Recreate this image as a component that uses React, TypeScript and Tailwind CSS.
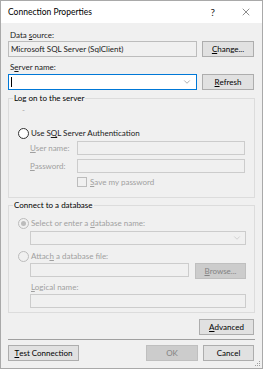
import { ChevronDown, X } from "lucide-react";

const font = {
  fontFamily: 'Lato, "Liberation Sans", Arial, sans-serif',
};

function U({ children }: { children: string }) {
  return <span className="underline underline-offset-[1px]">{children}</span>;
}

function Btn({
  children,
  disabled,
  className = "",
}: {
  children: React.ReactNode;
  disabled?: boolean;
  className?: string;
}) {
  return (
    <div
      className={
        "h-[16px] flex items-center justify-center border whitespace-nowrap " +
        (disabled
          ? "bg-[#cccccc] border-[#bfbfbf] text-[#838383] "
          : "bg-[#e1e1e1] border-[#adadad] text-black ") +
        className
      }
    >
      {children}
    </div>
  );
}

function Radio({ checked, disabled }: { checked?: boolean; disabled?: boolean }) {
  return (
    <div
      className={
        "w-[11px] h-[11px] rounded-full border flex items-center justify-center shrink-0 " +
        (disabled ? "border-[#bcbcbc] bg-[#f0f0f0]" : "border-[#333333] bg-white")
      }
    >
      {checked && <div className="w-[5px] h-[5px] rounded-full bg-[#bcbcbc]" />}
    </div>
  );
}

function DisabledInput({ className = "" }: { className?: string }) {
  return <div className={"h-[14px] border border-[#cccccc] bg-[#f0f0f0] " + className} />;
}

function Group({
  title,
  children,
  className = "",
}: {
  title: string;
  children: React.ReactNode;
  className?: string;
}) {
  return (
    <div className={"relative border border-[#dcdcdc] " + className}>
      <span className="absolute -top-[7px] left-[4px] bg-[#f0f0f0] px-[1px] leading-[12px] text-black whitespace-nowrap">
        {title}
      </span>
      {children}
    </div>
  );
}

export default function App() {
  return (
    <div
      style={font}
      className="relative w-[263px] h-[369px] bg-[#f0f0f0] border border-[#a9a9a9] flex flex-col text-[8px] leading-[12px] text-[#1a1a1a] overflow-hidden"
    >
      {/* title bar */}
      <div className="h-[22px] bg-white flex items-center pl-[7px] shrink-0">
        <span className="text-[8.5px] text-black">Connection Properties</span>
        <span className="ml-auto mr-[25px] text-[10px]">?</span>
        <X size={12} strokeWidth={1} className="mr-[10px]" />
      </div>

      <div className="flex flex-col px-[7px] pt-[6px] flex-1 whitespace-nowrap">
        <div className="pl-[2px] h-[12px]">
          Data <U>s</U>ource:
        </div>
        <div className="flex gap-[5px] mr-[1px]">
          <div className="flex-1 h-[16px] border border-[#bcbcbc] bg-[#f0f0f0] flex items-center pl-[2px]">
            Microsoft SQL Server (SqlClient)
          </div>
          <Btn className="w-[52px]">
            <U>C</U>hange...
          </Btn>
        </div>

        <div className="pl-[2px] mt-[4px] h-[12px]">
          S<U>e</U>rver name:
        </div>
        <div className="flex gap-[5px] mt-[1px] mr-[1px]">
          <div className="flex-1 h-[16px] border border-[#0078d7] bg-white flex items-center pl-[2px]">
            <div className="w-[1px] h-[10px] bg-black" />
            <ChevronDown size={10} strokeWidth={1.2} className="ml-auto mr-[4px] text-[#606060]" />
          </div>
          <Btn className="w-[52px]">
            <U>R</U>efresh
          </Btn>
        </div>

        <Group title="Log on to the server" className="mt-[8px] h-[100px]">
          <div className="pl-[13px] pt-[5px] h-[17px] text-[#a0a0a0]">-</div>
          <div className="flex items-center gap-[2px] pl-[9px] mt-[11px] h-[12px]">
            <Radio />
            <span>
              Use S<U>Q</U>L Server Authentication
            </span>
          </div>
          <div className="flex items-center pl-[21px] mt-[2px] text-[#a0a0a0]">
            <span className="w-[47px]">
              <U>U</U>ser name:
            </span>
            <DisabledInput className="w-[168px]" />
          </div>
          <div className="flex items-center pl-[21px] mt-[4px] text-[#a0a0a0]">
            <span className="w-[47px]">
              <U>P</U>assword:
            </span>
            <DisabledInput className="w-[168px]" />
          </div>
          <div className="flex items-center gap-[3px] pl-[68px] mt-[3px] h-[12px] text-[#a0a0a0]">
            <div className="w-[10px] h-[10px] border border-[#bcbcbc]" />
            <span>
              <U>S</U>ave my password
            </span>
          </div>
        </Group>

        <Group title="Connect to a database" className="mt-[7px] h-[108px]">
          <div className="flex items-center gap-[2px] pl-[9px] mt-[11px] h-[12px] text-[#a0a0a0]">
            <Radio checked disabled />
            <span>
              Select or enter a <U>d</U>atabase name:
            </span>
          </div>
          <div className="ml-[21px] mr-[8px] mt-[2px] h-[14px] border border-[#cccccc] bg-[#f0f0f0] flex items-center">
            <ChevronDown size={10} strokeWidth={1.2} className="ml-auto mr-[3px] text-[#b0b0b0]" />
          </div>
          <div className="flex items-center gap-[2px] pl-[9px] mt-[5px] h-[12px] text-[#a0a0a0]">
            <Radio disabled />
            <span>
              Attac<U>h</U> a database file:
            </span>
          </div>
          <div className="flex gap-[6px] ml-[21px] mr-[8px] mt-[1px]">
            <DisabledInput className="flex-1" />
            <Btn disabled className="w-[51px] h-[14px]">
              <U>B</U>rowse...
            </Btn>
          </div>
          <div className="pl-[22px] mt-[2px] h-[12px] text-[#a0a0a0]">
            <U>L</U>ogical name:
          </div>
          <div className="ml-[21px] mr-[8px] mt-[1px]">
            <DisabledInput />
          </div>
        </Group>

        <div className="flex justify-end mt-[6px] mr-[1px]">
          <Btn className="w-[55px] h-[15px]">
            <U>A</U>dvanced
          </Btn>
        </div>

        <div className="h-[1px] bg-[#a0a0a0] mt-[4px]" />

        <div className="flex mt-[5px] gap-[5px] mr-[1px]">
          <Btn className="w-[71px]">
            <U>T</U>est Connection
          </Btn>
          <Btn disabled className="w-[52px] ml-auto">
            OK
          </Btn>
          <Btn className="w-[51px]">Cancel</Btn>
        </div>
      </div>

      {/* resize grip */}
      <svg className="absolute right-[1px] bottom-[1px]" width="7" height="7" viewBox="0 0 7 7">
        <rect x="5" y="1" width="1" height="1" fill="#a0a0a0" />
        <rect x="3" y="3" width="1" height="1" fill="#a0a0a0" />
        <rect x="5" y="3" width="1" height="1" fill="#a0a0a0" />
        <rect x="1" y="5" width="1" height="1" fill="#a0a0a0" />
        <rect x="3" y="5" width="1" height="1" fill="#a0a0a0" />
        <rect x="5" y="5" width="1" height="1" fill="#a0a0a0" />
      </svg>
    </div>
  );
}
